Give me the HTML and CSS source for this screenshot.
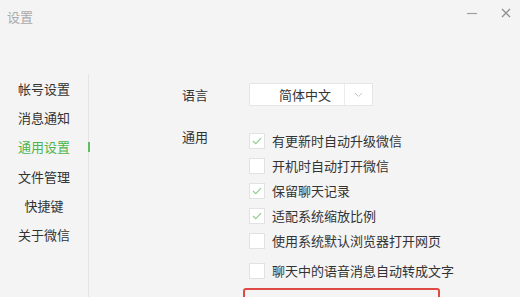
FILE: index.html
```html
<!DOCTYPE html>
<html lang="zh-CN">
<head>
<meta charset="utf-8">
<title>设置</title>
<link rel="stylesheet" href="styles.css">
</head>
<body>
<div class="window">
  <header class="titlebar">
    <span class="title">设置</span>
    <div class="controls">
      <svg class="ctl" width="12" height="12" viewBox="0 0 12 12"><path d="M1 6.5H11" stroke="#a0a0a0" stroke-width="1.2"/></svg>
      <svg class="ctl" width="12" height="12" viewBox="0 0 12 12"><path d="M2 2L10 10M10 2L2 10" stroke="#8f8f8f" stroke-width="1.3"/></svg>
    </div>
  </header>
  <div class="main">
    <nav class="sidebar">
      <div class="nav-item">帐号设置</div>
      <div class="nav-item">消息通知</div>
      <div class="nav-item active">通用设置</div>
      <div class="nav-item">文件管理</div>
      <div class="nav-item">快捷键</div>
      <div class="nav-item">关于微信</div>
    </nav>
    <section class="content">
      <div class="row lang-row">
        <span class="label">语言</span>
        <div class="select">
          <span class="select-text">简体中文</span>
          <span class="select-arrow">
            <svg width="9" height="6" viewBox="0 0 9 6"><path d="M1 1L4.5 4.5L8 1" fill="none" stroke="#c8c8c8" stroke-width="1"/></svg>
          </span>
        </div>
      </div>
      <div class="row general-row">
        <span class="label general-label">通用</span>
        <div class="options">
          <div class="option"><span class="box checked"><svg width="10" height="8" viewBox="0 0 10 8"><path d="M1 4L3.8 6.6L9 1.2" fill="none" stroke="#8fcf8f" stroke-width="1.2"/></svg></span><span>有更新时自动升级微信</span></div>
          <div class="option"><span class="box"></span><span>开机时自动打开微信</span></div>
          <div class="option"><span class="box checked"><svg width="10" height="8" viewBox="0 0 10 8"><path d="M1 4L3.8 6.6L9 1.2" fill="none" stroke="#8fcf8f" stroke-width="1.2"/></svg></span><span>保留聊天记录</span></div>
          <div class="option"><span class="box checked"><svg width="10" height="8" viewBox="0 0 10 8"><path d="M1 4L3.8 6.6L9 1.2" fill="none" stroke="#8fcf8f" stroke-width="1.2"/></svg></span><span>适配系统缩放比例</span></div>
          <div class="option"><span class="box"></span><span>使用系统默认浏览器打开网页</span></div>
          <div class="option last"><span class="box"></span><span>聊天中的语音消息自动转成文字</span></div>
          <div class="highlight"></div>
        </div>
      </div>
    </section>
  </div>
</div>
</body>
</html>
```
FILE: styles.css
```css
* { box-sizing: border-box; }
html, body {
  margin: 0;
  padding: 0;
  background: #f4f4f4;
}
body {
  font-family: "Noto Sans CJK SC", "Noto Sans", sans-serif;
  font-size: 13px;
  color: #333;
  width: 520px;
  height: 297px;
  overflow: hidden;
}
.window {
  width: 520px;
  height: 297px;
  display: flex;
  flex-direction: column;
  overflow: hidden;
}
.titlebar {
  flex: none;
  height: 74px;
  display: flex;
  justify-content: space-between;
  align-items: flex-start;
  padding: 7px 8px 0 7px;
}
.title {
  color: #aaa;
  font-size: 13px;
  line-height: 20px;
}
.controls {
  display: flex;
  gap: 22px;
  padding-top: 0;
}
.ctl { display: block; }
.main {
  flex: 1 1 auto;
  min-height: 0;
  display: flex;
}
.sidebar {
  flex: none;
  width: 89px;
  border-right: 1px solid #e4e4e4;
  position: relative;
}
.nav-item {
  height: 29.2px;
  line-height: 29px;
  text-align: center;
  color: #333;
  position: relative;
}
.nav-item.active {
  color: #4cb44c;
}
.nav-item.active::after {
  content: "";
  position: absolute;
  right: -2px;
  top: 10px;
  width: 2px;
  height: 10px;
  background: #5fc05f;
}
.content {
  flex: 1;
  padding: 9px 0 0 93px;
  display: flex;
  flex-direction: column;
}
.row {
  display: flex;
  align-items: flex-start;
  flex: none;
}
.label {
  width: 67px;
  line-height: 23px;
  color: #333;
}
.select {
  width: 124px;
  height: 23px;
  background: #fff;
  border: 1px solid #e6e6e6;
  display: flex;
}
.select-text {
  flex: 1;
  text-align: center;
  padding-left: 16px;
  line-height: 21px;
  color: #333;
  border-right: 1px solid #ececec;
}
.select-arrow {
  width: 27px;
  display: flex;
  align-items: center;
  justify-content: center;
}
.general-row {
  margin-top: 21px;
}
.general-label {
  line-height: 20px;
}
.options {
  display: flex;
  flex-direction: column;
  margin-top: 1px;
}
.option {
  flex: none;
  height: 25px;
  display: flex;
  align-items: center;
  gap: 7px;
  color: #333;
  white-space: nowrap;
}
.option.last {
  margin-top: 5px;
}
.box {
  width: 16px;
  height: 16px;
  background: #fff;
  border: 1px solid #e2e2e2;
  display: flex;
  align-items: center;
  justify-content: center;
  flex: none;
}
.highlight {
  flex: none;
  margin-top: 5px;
  margin-left: -6px;
  width: 197px;
  height: 30px;
  border: 2px solid #e04a45;
  border-radius: 3px;
}
```
